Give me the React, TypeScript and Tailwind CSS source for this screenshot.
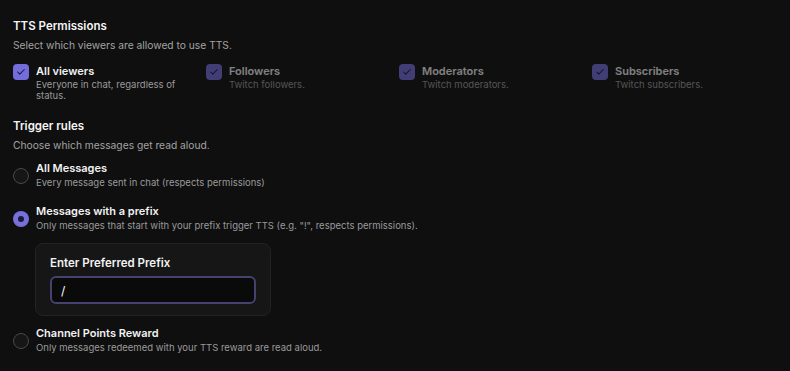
import { Check } from 'lucide-react';

type Perm = { label: string; desc: string; checked: boolean; disabled: boolean };

const perms: Perm[] = [
  { label: 'All viewers', desc: 'Everyone in chat, regardless of status.', checked: true, disabled: false },
  { label: 'Followers', desc: 'Twitch followers.', checked: true, disabled: true },
  { label: 'Moderators', desc: 'Twitch moderators.', checked: true, disabled: true },
  { label: 'Subscribers', desc: 'Twitch subscribers.', checked: true, disabled: true },
];

function Radio({ selected }: { selected: boolean }) {
  if (selected) {
    return (
      <span className="flex h-4 w-4 shrink-0 items-center justify-center rounded-full bg-[#7670dc]">
        <span className="h-[6px] w-[6px] rounded-full bg-[#1c1a33]" />
      </span>
    );
  }
  return <span className="h-4 w-4 shrink-0 rounded-full border-[1.5px] border-[#4a4a4a] bg-[#161616]" />;
}

function RadioRow({ label, desc, selected }: { label: string; desc: string; selected: boolean }) {
  return (
    <div className="flex items-center gap-[7px]">
      <Radio selected={selected} />
      <div>
        <div className="text-[11px] font-semibold leading-[15px] text-[#f2f2f2]">{label}</div>
        <div className="text-[9.5px] leading-[14px] text-[#9a9a9a]">{desc}</div>
      </div>
    </div>
  );
}

export default function App() {
  return (
    <div
      className="min-h-screen bg-[#0f0f0f] px-[13px] pt-[17px]"
      style={{ fontFamily: 'Inter, "Noto Sans", sans-serif' }}
    >
      {/* Permissions */}
      <section>
        <h2 className="text-[11.5px] font-semibold leading-[18px] text-[#f5f5f5]">TTS Permissions</h2>
        <p className="mt-[1px] text-[10.25px] leading-[18px] text-[#a3a3a3]">
          Select which viewers are allowed to use TTS.
        </p>
        <div className="mt-[9px] grid grid-cols-4 gap-x-2">
          {perms.map((p) => (
            <div key={p.label} className={`flex gap-[7px] pr-2 ${p.disabled ? 'opacity-50' : ''}`}>
              <span className="mt-[1px] flex h-4 w-4 shrink-0 items-center justify-center rounded-[4px] bg-[#736ddb]">
                <Check className="h-[10px] w-[10px] text-[#1c1a3a]" strokeWidth={2.5} />
              </span>
              <div>
                <div className="text-[11px] font-semibold leading-[16px] text-[#f2f2f2]">{p.label}</div>
                <div className="text-[9.5px] leading-[11px] text-[#9a9a9a]">{p.desc}</div>
              </div>
            </div>
          ))}
        </div>
      </section>

      {/* Trigger rules */}
      <section className="mt-[16px]">
        <h2 className="text-[11.5px] font-semibold leading-[18px] text-[#f5f5f5]">Trigger rules</h2>
        <p className="mt-[1px] text-[10.25px] leading-[18px] text-[#a3a3a3]">Choose which messages get read aloud.</p>

        <div className="mt-[7px] flex flex-col">
          <RadioRow
            label="All Messages"
            desc="Every message sent in chat (respects permissions)"
            selected={false}
          />
          <div className="mt-[14px]">
            <RadioRow
              label="Messages with a prefix"
              desc={'Only messages that start with your prefix trigger TTS (e.g. "!", respects permissions).'}
              selected
            />
          </div>
          <div className="ml-[22px] mt-[10px] w-[236px] rounded-lg border border-[#232323] bg-[#161616] px-[14px] pb-[11px] pt-[11px]">
            <label className="block text-[11.5px] font-semibold leading-[16px] text-[#f2f2f2]">
              Enter Preferred Prefix
            </label>
            <input
              readOnly
              value="/"
              className="mt-[5px] h-[28px] w-full rounded-md border-2 border-[#45426f] bg-[#0a0a0a] px-[9px] text-[12px] text-white outline-none"
            />
          </div>
          <div className="mt-[10px]">
            <RadioRow
              label="Channel Points Reward"
              desc="Only messages redeemed with your TTS reward are read aloud."
              selected={false}
            />
          </div>
        </div>
      </section>
    </div>
  );
}
